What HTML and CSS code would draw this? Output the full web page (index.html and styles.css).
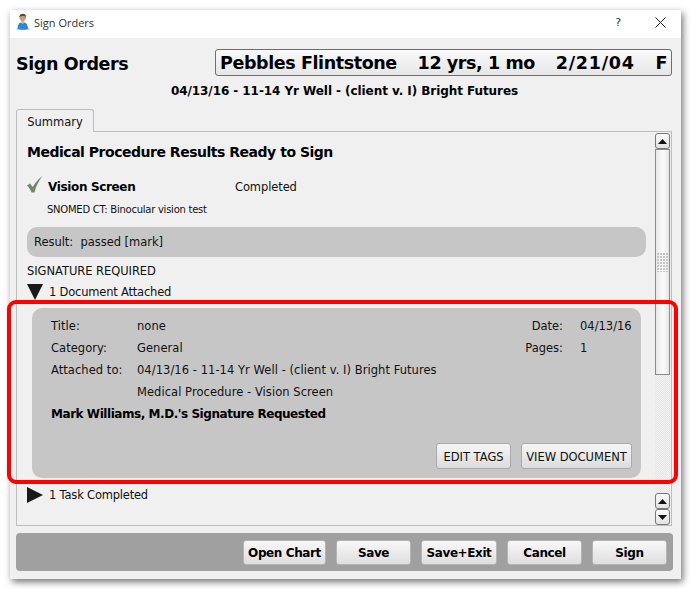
FILE: index.html
```html
<!DOCTYPE html>
<html lang="en">
<head>
<meta charset="utf-8">
<title>Sign Orders</title>
<link rel="stylesheet" href="styles.css">
</head>
<body>
<div class="window">
  <header class="titlebar">
    <svg class="app-icon" width="16" height="18" viewBox="0 0 16 18">
      <path d="M1 16.5c1-1 2-1.400 3-1.600l9 .2c1 .3 1.500 .8 2 1.400H1z" fill="#9fb4c8"/>
      <path d="M2.500 16c0-3.500 1.500-6 3-6.500l2 1 2.200-1c2 .7 3.300 3 3.300 6.500-2 1-8 1-10.500 0z" fill="#2f86d6"/>
      <path d="M6 9l1.700 2L9.500 9l-.3-2H6.200z" fill="#d9b08c"/>
      <circle cx="7.700" cy="4.500" r="3.200" fill="#c99c7a"/>
      <path d="M4.400 4.500C4.200 1.800 6 .8 7.800 .8s3.500 1 3.200 3.600c-.8-1-2-1.500-3.300-1.400-1.300 0-2.500.5-3.300 1.500z" fill="#5a4a3e"/>
    </svg>
    <span class="titlebar-text">Sign Orders</span>
    <span class="help">?</span>
    <svg class="close" width="11" height="11" viewBox="0 0 11 11"><path d="M.5.500l10 10M10.500.500l-10 10" stroke="#222" stroke-width="1" fill="none"/></svg>
  </header>

  <div class="content">
    <div class="head-row">
      <h1 class="page-title">Sign Orders</h1>
      <div class="patient">
        <span>Pebbles Flintstone</span><span>12 yrs, 1 mo</span><span class="dob">2/21/04</span><span>F</span>
      </div>
    </div>
    <div class="visit">04/13/16 - 11-14 Yr Well - (client v. I) Bright Futures</div>

    <div class="tabs"><div class="tab">Summary</div></div>
    <div class="pane">
      <div class="scroll-body">
        <h2 class="section-title">Medical Procedure Results Ready to Sign</h2>
        <div class="proc-row">
          <svg class="check" width="16" height="17" viewBox="0 0 16 17">
            <path d="M0 9.500L3 7.500 5.800 11C8 7 11 3 15.500 0 12 4.500 9 10 7.500 16.500H4.500C3.500 13.500 2 11.500 0 9.500z" fill="#71896a"/>
          </svg>
          <span class="proc-name">Vision Screen</span>
          <span class="proc-status">Completed</span>
        </div>
        <div class="snomed">SNOMED CT: Binocular vision test</div>
        <div class="result">Result:&nbsp; passed [mark]</div>
        <div class="sig-req">SIGNATURE REQUIRED</div>
        <div class="disclosure">
          <svg width="16" height="16" viewBox="0 0 16 16"><path d="M0 0h16L8 16z" fill="#1a1a1a"/></svg>
          <span>1 Document Attached</span>
        </div>
        <div class="doc-panel">
          <div class="doc-top">
            <dl class="fields">
              <dt>Title:</dt><dd>none</dd>
              <dt>Category:</dt><dd>General</dd>
              <dt>Attached to:</dt><dd>04/13/16 - 11-14 Yr Well - (client v. I) Bright Futures</dd>
              <dt></dt><dd>Medical Procedure - Vision Screen</dd>
            </dl>
            <dl class="fields-right">
              <dt>Date:</dt><dd>04/13/16</dd>
              <dt>Pages:</dt><dd>1</dd>
            </dl>
          </div>
          <div class="sig-line">Mark Williams, M.D.'s Signature Requested</div>
          <div class="doc-actions">
            <button class="btn-light btn-tags">EDIT TAGS</button>
            <button class="btn-light btn-view">VIEW DOCUMENT</button>
          </div>
        </div>
        <div class="disclosure task">
          <svg width="16" height="16" viewBox="0 0 16 16"><path d="M0 0l16 8L0 16z" fill="#1a1a1a"/></svg>
          <span>1 Task Completed</span>
        </div>
      </div>
      <div class="scrollbar">
        <div class="sb-btn"><svg width="9" height="5" viewBox="0 0 9 5"><path d="M4.500 0L9 5H0z" fill="#111"/></svg></div>
        <div class="sb-thumb">
          <svg class="grip" width="11" height="19" viewBox="0 0 11 19">
            <defs><pattern id="dots" width="3" height="3" patternUnits="userSpaceOnUse"><rect width="2" height="2" fill="#c4c4c4"/></pattern></defs>
            <rect width="11" height="19" fill="url(#dots)"/>
          </svg>
        </div>
        <div class="sb-track"></div>
        <div class="sb-btn"><svg width="9" height="5" viewBox="0 0 9 5"><path d="M4.500 0L9 5H0z" fill="#111"/></svg></div>
        <div class="sb-btn"><svg width="9" height="5" viewBox="0 0 9 5"><path d="M0 0h9L4.500 5z" fill="#111"/></svg></div>
      </div>
    </div>

    <div class="footer">
      <button class="btn-foot btn-chart">Open Chart</button>
      <button class="btn-foot btn-save">Save</button>
      <button class="btn-foot btn-exit">Save+Exit</button>
      <button class="btn-foot btn-cancel">Cancel</button>
      <button class="btn-foot btn-sign">Sign</button>
    </div>
  </div>
  <div class="highlight"></div>
</div>
</body>
</html>
```
FILE: styles.css
```css
* { box-sizing: border-box; }
html, body { margin: 0; padding: 0; }
body {
  width: 691px;
  height: 589px;
  padding: 10px;
  background: #fff;
  overflow: hidden;
  font-family: "DejaVu Sans", Verdana, sans-serif;
  font-size: 11px;
  color: #111;
}
.window {
  position: relative;
  width: 671px;
  height: 569px;
  background: #f0f0f0;
  box-shadow: 2px 3px 7px rgba(0,0,0,.55);
  display: flex;
  flex-direction: column;
}
.titlebar {
  height: 28px;
  background: #fff;
  display: flex;
  align-items: center;
  padding: 0 15px 4px 5px;
  flex: none;
}
.app-icon { margin-right: 2px; }
.titlebar-text { font-family: "Open Sans", sans-serif; font-size: 11px; color: #333; flex: 1; margin-left: 1px; }
.help { font-size: 11px; color: #333; margin-right: 34px; }
.content {
  flex: 1;
  display: flex;
  flex-direction: column;
  padding: 11px 8px 8px 6px;
}
.head-row {
  display: flex;
  align-items: center;
  justify-content: space-between;
  height: 27px;
  flex: none;
}
.page-title { margin: 0; padding-top: 2px; font-size: 17.500px; font-weight: 700; letter-spacing: -.4px; color: #000; }
.patient {
  width: 457px;
  height: 27px;
  margin-right: 1px;
  display: flex;
  justify-content: space-between;
  align-items: center;
  padding: 1px 4px 0;
  border: 1px solid #6e6e6e;
  border-radius: 3px;
  background: linear-gradient(#fafafa, #e6e6e6);
  font-size: 17.500px;
  font-weight: 700;
  letter-spacing: -.4px;
  color: #000;
  white-space: pre;
}
.dob { letter-spacing: .75px; }
.visit {
  flex: none;
  text-align: center;
  font-size: 12px;
  font-weight: 700;
  letter-spacing: -.07px;
  margin-top: 7px;
  height: 15px;
  line-height: 16px;
  color: #000;
}
.tabs { flex: none; display: flex; margin-top: 11px; height: 23px; position: relative; z-index: 1; }
.tab {
  width: 78px;
  height: 23px;
  border: 1px solid #bdbdbd;
  border-bottom: none;
  border-radius: 3px 3px 0 0;
  background: #f0f0f0;
  text-align: center;
  line-height: 24px;
  font-size: 11.500px;
  color: #111;
}
.pane {
  flex: none;
  width: 656px;
  height: 395px;
  margin-top: -1px;
  border: 1px solid #bdbdbd;
  display: flex;
  position: relative;
}
.scroll-body { flex: 1; padding: 0 9px 0 10px; min-width: 0; }
.section-title { margin: 11px 0 0; font-size: 14px; line-height: 18px; font-weight: 700; letter-spacing: -.48px; color: #000; }
.proc-row { display: flex; align-items: center; margin-top: 17px; height: 18px; }
.check { flex: none; margin-top: -5px; }
.proc-name { width: 187px; margin-left: 5px; font-size: 12px; font-weight: 700; letter-spacing: -.35px; color: #000; }
.proc-status { letter-spacing: -.1px; font-size: 11.500px; }
.snomed { margin: 7px 0 0 20px; font-size: 10px; line-height: 13px; letter-spacing: -.25px; }
.result {
  margin-top: 11px;
  height: 30px;
  line-height: 30px;
  padding-left: 7px;
  border-radius: 10px;
  background: #c6c6c6;
  font-size: 11.500px;
  letter-spacing: -.03px;
}
.sig-req { margin-top: 7px; font-size: 11.500px; line-height: 14px; letter-spacing: -.05px; }
.disclosure { display: flex; align-items: center; gap: 6px; height: 16px; margin-top: 6px; font-size: 11.500px; letter-spacing: -.2px; }
.doc-panel {
  margin: 8px 5px 0 5px;
  height: 170px;
  border-radius: 10px;
  background: #c6c6c6;
  padding: 7px 9px 9px 19px;
  display: flex;
  flex-direction: column;
}
.doc-top { display: flex; justify-content: space-between; height: 89px; }
.fields { margin: 0; display: grid; grid-template-columns: 86px auto; grid-auto-rows: 22px; align-items: center; font-size: 11.500px; letter-spacing: .05px; }
.fields dd, .fields-right dd { margin: 0; }
.fields-right { margin: 0; display: grid; grid-template-columns: auto 52px; column-gap: 17px; grid-auto-rows: 22px; align-items: center; align-content: start; font-size: 11.500px; }
.fields-right dt { text-align: right; }
.fields-right dd { text-align: left; }
.sig-line { margin-top: 0; height: 20px; line-height: 20px; font-size: 12px; font-weight: 700; letter-spacing: -.45px; color: #000; }
.doc-actions { margin-top: auto; display: flex; justify-content: flex-end; gap: 10px; }
.btn-light {
  height: 26px;
  padding: 1px 0 0;
  border: 1px solid #aaa;
  border-radius: 3px;
  background: linear-gradient(#f6f6f6, #dcdcdc);
  font-family: inherit;
  font-size: 11.500px;
  color: #111;
}
.btn-tags { width: 75px; }
.btn-view { width: 111px; }
.task { margin-top: 9px; }
.scrollbar {
  flex: none;
  width: 15px;
  margin: 1px 1px 0 0;
  display: flex;
  flex-direction: column;
  background: repeating-conic-gradient(#e4e4e4 0 25%, #f4f4f4 0 50%) 0 0 / 2px 2px;
}
.sb-btn {
  flex: none;
  height: 16px;
  border: 1px solid #777;
  border-radius: 3px;
  background: linear-gradient(#fafafa, #e2e2e2);
  display: flex;
  align-items: center;
  justify-content: center;
}
.sb-thumb {
  flex: none;
  height: 226px;
  border: 1px solid #8a8a8a;
  background: linear-gradient(90deg, #e8e8e8, #fbfbfb 55%, #e6e6e6);
  display: flex;
  align-items: center;
  justify-content: center;
}
.grip { margin-top: 1px; }
.sb-track { flex: 1; }
.footer {
  flex: none;
  margin-top: 7px;
  height: 38px;
  width: 657px;
  border-radius: 4px;
  background: #a0a0a0;
  display: flex;
  align-items: center;
  justify-content: flex-end;
  gap: 10px;
  padding-right: 6px;
}
.btn-foot {
  height: 25px;
  padding: 1px 0 0;
  border: 1px solid #b4b4b4;
  border-radius: 3px;
  background: linear-gradient(#f8f8f8, #dedede);
  font-family: inherit;
  font-size: 12px;
  font-weight: 700;
  letter-spacing: -.4px;
  color: #000;
}
.btn-chart { width: 83px; }
.btn-save { width: 75px; }
.btn-exit { width: 76px; }
.btn-cancel { width: 75px; }
.btn-sign { width: 75px; }
.highlight {
  position: absolute;
  left: -3px;
  top: 290px;
  width: 671px;
  height: 184px;
  border: 4px solid #f00;
  border-radius: 9px;
  pointer-events: none;
}
```
